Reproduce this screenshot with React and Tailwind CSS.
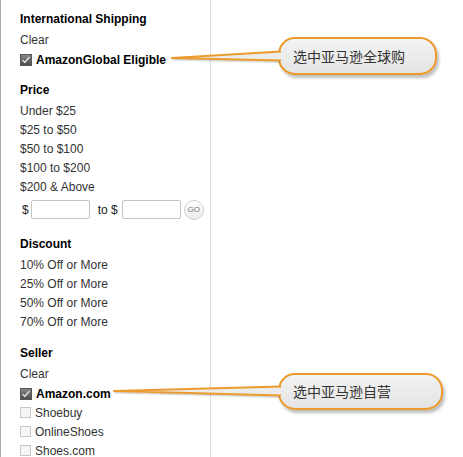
import React from "react";

const FONT = { fontFamily: '"Liberation Sans", Arial, sans-serif' };
const CJK = { fontFamily: '"Noto Sans CJK SC", "Liberation Sans", sans-serif' };

function Check({ checked }) {
  if (!checked) {
    return <span className="inline-block w-[11px] h-[11px] border border-[#c8c8c8] bg-[#f6f6f6] mr-[4px] shrink-0" />;
  }
  return (
    <svg width="12" height="12" viewBox="0 0 12 12" className="mr-[4px] shrink-0">
      <defs>
        <linearGradient id="cb" x1="0" y1="0" x2="0" y2="1">
          <stop offset="0" stopColor="#8a8a8a" />
          <stop offset="1" stopColor="#4a4a4a" />
        </linearGradient>
      </defs>
      <rect x="0.5" y="0.5" width="11" height="11" fill="url(#cb)" stroke="#555" />
      <path d="M2.6 6.2 L4.8 8.4 L9.4 3.2" fill="none" stroke="#fff" strokeWidth="1.1" />
    </svg>
  );
}

function Heading({ children, className = "" }) {
  return <div className={`h-[19px] leading-[19px] font-bold text-black mb-[2px] ${className}`}>{children}</div>;
}

function Item({ children }) {
  return <div className="h-[19px] leading-[19px] text-[#333]">{children}</div>;
}

function CheckItem({ checked, children }) {
  return (
    <div className={`h-[19px] flex items-center ${checked ? "font-bold text-black" : "text-[#333]"}`}>
      <Check checked={checked} />
      <span>{children}</span>
    </div>
  );
}

function Callout({ tip, top, bottom, box, text }) {
  const x = box.left;
  return (
    <>
      <div
        className="absolute rounded-[17px] border-[2.5px] border-[#eb9a2e] bg-gradient-to-b from-[#f3f3f3] to-[#e4e4e4] shadow-[2px_3px_3px_rgba(0,0,0,0.25)] flex items-center pl-[13px] text-[14px] text-[#333]"
        style={{ left: box.left, top: box.top, width: box.width, height: box.height, ...CJK }}
      >
        {text}
      </div>
      <svg className="absolute left-0 top-0 pointer-events-none" width="463" height="457">
        <path
          d={`M${tip[0]} ${tip[1] + 1.5} L${x + 2} ${bottom + 1.5}`}
          stroke="rgba(0,0,0,0.15)"
          strokeWidth="2"
          fill="none"
        />
        <path d={`M${tip[0]} ${tip[1]} L${x + 4} ${top} L${x + 4} ${bottom} Z`} fill="#ececec" />
        <path
          d={`M${x + 3} ${top} L${tip[0]} ${tip[1]} L${x + 3} ${bottom}`}
          stroke="#eb9a2e"
          strokeWidth="2.2"
          fill="none"
          strokeLinejoin="round"
        />
      </svg>
    </>
  );
}

export default function App() {
  return (
    <div className="relative w-[463px] h-[457px] bg-white overflow-hidden text-[12px]" style={FONT}>
      <div className="w-[211px] h-full border-l border-l-[#a8a8a8] border-r border-r-[#dcdcdc] pl-[19px] pt-[10px]">
        <Heading>International Shipping</Heading>
        <Item>Clear</Item>
        <CheckItem checked>AmazonGlobal Eligible</CheckItem>

        <Heading className="mt-3">Price</Heading>
        <Item>Under $25</Item>
        <Item>$25 to $50</Item>
        <Item>$50 to $100</Item>
        <Item>$100 to $200</Item>
        <Item>$200 &amp; Above</Item>
        <div className="flex items-center h-[21px] mt-[2px] text-[#222]">
          <span className="ml-[2px] mr-[2px]">$</span>
          <span className="w-[59px] h-[19px] border border-[#c4c4c4] rounded-[2px] bg-white" />
          <span className="ml-[8px] mr-[4px]">to $</span>
          <span className="w-[59px] h-[19px] border border-[#c4c4c4] rounded-[2px] bg-white" />
          <span className="ml-[3px] w-[20px] h-[20px] rounded-full border border-[#cfcfcf] bg-gradient-to-b from-white to-[#ececec] flex items-center justify-center text-[8px] text-[#777]">
            GO
          </span>
        </div>

        <Heading className="mt-[15px]">Discount</Heading>
        <Item>10% Off or More</Item>
        <Item>25% Off or More</Item>
        <Item>50% Off or More</Item>
        <Item>70% Off or More</Item>

        <Heading className="mt-[12px]">Seller</Heading>
        <Item>Clear</Item>
        <CheckItem checked>Amazon.com</CheckItem>
        <CheckItem>Shoebuy</CheckItem>
        <CheckItem>OnlineShoes</CheckItem>
        <CheckItem>Shoes.com</CheckItem>
      </div>

      <Callout
        tip={[172, 58]}
        top={51.5}
        bottom={60.5}
        box={{ left: 278, top: 37, width: 159, height: 38 }}
        text="选中亚马逊全球购"
      />
      <Callout
        tip={[114, 391]}
        top={386.5}
        bottom={395.5}
        box={{ left: 278, top: 373, width: 165, height: 37 }}
        text="选中亚马逊自营"
      />
    </div>
  );
}
